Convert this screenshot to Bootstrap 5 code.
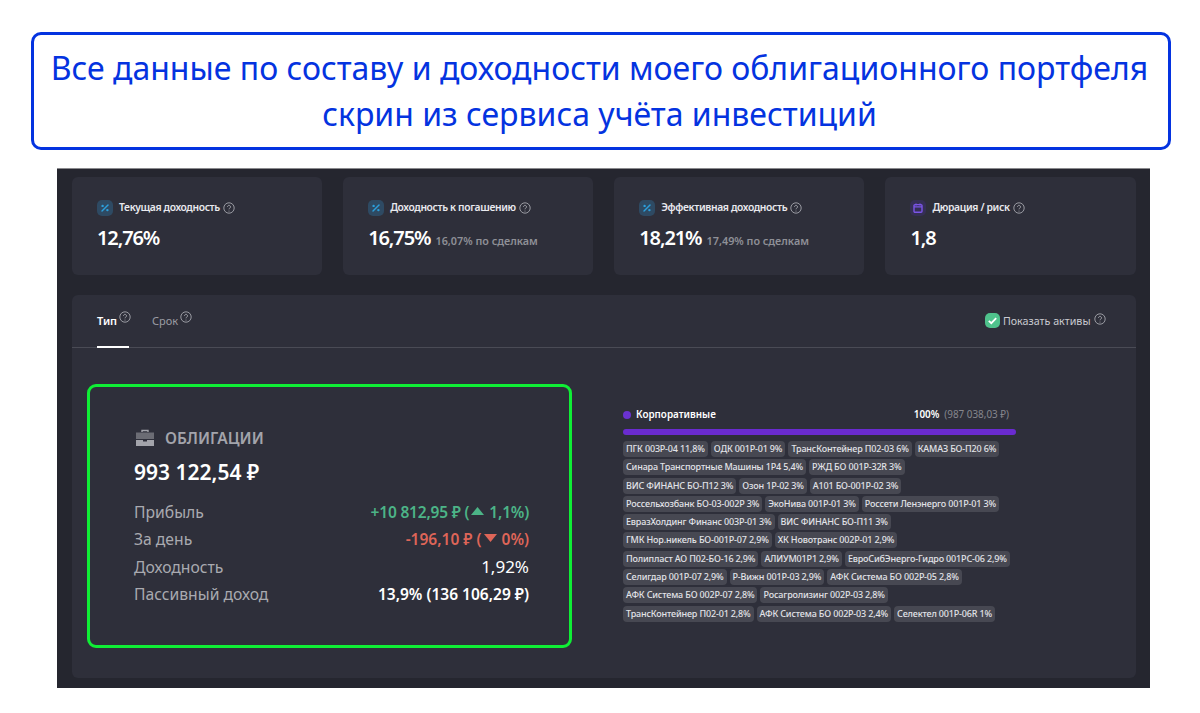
<!DOCTYPE html>
<html lang="ru">
<head>
    <meta charset="UTF-8">
    <meta name="viewport" content="width=device-width, initial-scale=1.0">
    <title>Облигационный портфель</title>
    <link href="https://cdn.jsdelivr.net/npm/bootstrap@5.3.0/dist/css/bootstrap.min.css" rel="stylesheet">
    <style>
        body {
            background: #fff;
            font-family: "Noto Sans", "Open Sans", sans-serif;
            height: 713px;
            overflow: hidden;
        }
        .page-wrap {
            padding: 32px 29px 0 31px;
        }
        .caption-box {
            height: 118px;
            border: 3px solid #0433e0;
            border-radius: 10px;
            color: #0433e0;
            font-size: 32px;
            line-height: 46px;
            padding: 10px 3px 0 0;
        }
        .shot {
            width: 1093px;
            height: 520px;
            margin: 18px 0 0 26px;
            background: #25262f;
            border-top: 1px solid #8a8a8e;
            padding: 8px 14.5px 10px 15px;
            color: #fff;
        }
        .stat-row {
            display: grid;
            grid-template-columns: repeat(4, 1fr);
            gap: 21px;
            height: 98px;
        }
        .stat-box {
            background: #2e2f3a;
            border-radius: 6px;
            padding: 23px 25px 0;
        }
        .stat-title {
            font-size: 10.3px;
            font-weight: 600;
            color: #e9e9ee;
            height: 16px;
            letter-spacing: -.35px;
        }
        .stat-icon {
            width: 16px;
            height: 16px;
            border-radius: 5px;
            background: #2e4a63;
            margin-right: 6px;
        }
        .stat-icon.violet { background: #352f55; }
        .hint {
            width: 12px;
            height: 12px;
            margin-left: 3px;
            flex: none;
        }
        .stat-value {
            font-size: 20px;
            font-weight: 600;
            line-height: 26px;
            margin-top: 9px;
            letter-spacing: -1.1px;
        }
        .stat-note {
            font-size: 10.8px;
            font-weight: 600;
            color: #8f9097;
            letter-spacing: 0;
            margin-left: 1px;
        }
        .main-panel {
            background: #2e2f3a;
            border-radius: 6px;
            margin-top: 20px;
            height: 383px;
        }
        .tab-bar {
            height: 53px;
            border-bottom: 1px solid #4a4b55;
            padding: 0 25px;
            font-size: 11px;
        }
        .tab-item {
            height: 53px;
            padding-top: 16px;
            color: #9a9ba3;
            margin-right: 23px;
            width: 32px;
            white-space: nowrap;
        }
        .tab-item.on {
            color: #fff;
            font-weight: 600;
            border-bottom: 2px solid #fff;
        }
        .tab-item .hint { margin-left: 2px; vertical-align: 2px; }
        .show-toggle {
            color: #c9cad0;
            font-size: 10.7px;
            padding-top: 18px;
            margin-right: 5px;
            height: 53px;
        }
        .check-box {
            width: 15px;
            height: 15px;
            border-radius: 5px;
            background: #4fc28c;
            margin-right: 3px;
        }
        .panel-body {
            padding: 36px 0 0 15px;
        }
        .bond-box {
            width: 485px;
            height: 264px;
            flex: none;
            border: 3px solid #0fee35;
            border-radius: 9px;
            padding: 41px 40px 0 44px;
            color: #a9aab0;
            font-size: 15.7px;
        }
        .bond-head {
            font-weight: 600;
            font-size: 15.5px;
            color: #a3a4ab;
            line-height: 20px;
        }
        .bond-head svg { margin: 0 10px 0 1px; }
        .bond-total {
            color: #fff;
            font-size: 21px;
            font-weight: 600;
            line-height: 28px;
            margin: 10px 0 13px;
        }
        .bond-row { height: 27.3px; line-height: 26px; }
        .val-up { color: #4cb487; font-weight: 600; font-size: 15.5px; letter-spacing: -.2px; }
        .val-down { color: #de6558; font-weight: 600; font-size: 15.5px; }
        .val-plain { color: #fff; font-size: 17px; }
        .val-bold { color: #fff; font-weight: 600; font-size: 15.5px; }
        .tri { width: 15px; height: 10px; margin: 0 4px 0 1px; vertical-align: 2px; }
        .class-col {
            width: 393px;
            margin: 21px 0 0 51px;
            font-size: 9px;
        }
        .class-head {
            font-size: 9.9px;
            font-weight: 600;
            height: 19px;
            line-height: 19px;
        }
        .dot {
            width: 8px;
            height: 8px;
            border-radius: 50%;
            background: #6a32d0;
            margin-right: 5px;
        }
        .class-sum { color: #85868d; font-weight: 400; margin: 0 7px 0 5px; }
        .class-bar {
            height: 6px;
            border-radius: 3px;
            background: #6a2bd0;
            margin: 5px 0 6px;
        }
        .chip-row { gap: 3px; margin-bottom: 2.3px; white-space: nowrap; }
        .chip-row span {
            background: #474852;
            color: #e2e3e8;
            border-radius: 4px;
            height: 16px;
            line-height: 15px;
            padding: 0 3px;
            font-weight: 500;
            letter-spacing: -.16px;
        }
    </style>
</head>
<body>
    <svg width="0" height="0" class="position-absolute">
        <symbol id="hint" viewBox="0 0 12 12">
            <circle cx="6" cy="6" r="5.2" fill="none" stroke="#b4b5bb" stroke-width=".8"/>
            <path d="M4.500 4.800a1.500 1.500 0 1 1 2.300 1.300c-.5.3-.8.6-.8 1.200" fill="none" stroke="#b4b5bb" stroke-width=".8"/>
            <circle cx="6" cy="8.900" r=".5" fill="#b4b5bb"/>
        </symbol>
        <symbol id="percent" viewBox="0 0 16 16">
            <path d="M5 11l6-6" stroke="#2c9fdc" stroke-width="1.4" stroke-linecap="round"/>
            <circle cx="5.600" cy="5.900" r="1.200" fill="#2c9fdc"/>
            <circle cx="10.400" cy="10.100" r="1.200" fill="#2c9fdc"/>
        </symbol>
    </svg>

    <div class="page-wrap">
        <div class="caption-box text-center">
            Все данные по составу и доходности моего облигационного портфеля<br>
            скрин из сервиса учёта инвестиций
        </div>

        <div class="shot">
            <!-- Stat cards -->
            <div class="stat-row">
                <div class="stat-box">
                    <div class="stat-title d-flex align-items-center">
                        <svg class="stat-icon"><use href="#percent"/></svg>Текущая доходность<svg class="hint"><use href="#hint"/></svg>
                    </div>
                    <div class="stat-value">12,76%</div>
                </div>
                <div class="stat-box">
                    <div class="stat-title d-flex align-items-center">
                        <svg class="stat-icon"><use href="#percent"/></svg>Доходность к погашению<svg class="hint"><use href="#hint"/></svg>
                    </div>
                    <div class="stat-value">16,75% <span class="stat-note">16,07% по сделкам</span></div>
                </div>
                <div class="stat-box">
                    <div class="stat-title d-flex align-items-center">
                        <svg class="stat-icon"><use href="#percent"/></svg>Эффективная доходность<svg class="hint"><use href="#hint"/></svg>
                    </div>
                    <div class="stat-value">18,21% <span class="stat-note">17,49% по сделкам</span></div>
                </div>
                <div class="stat-box">
                    <div class="stat-title d-flex align-items-center">
                        <svg class="stat-icon violet" viewBox="0 0 16 16">
                            <rect x="4" y="4.600" width="8" height="7.600" rx="1" fill="none" stroke="#7b55e8" stroke-width="1.400"/>
                            <path d="M4 6.800h8M6 3.400v2M10 3.400v2" stroke="#7b55e8" stroke-width="1.200"/>
                        </svg>Дюрация / риск<svg class="hint"><use href="#hint"/></svg>
                    </div>
                    <div class="stat-value">1,8</div>
                </div>
            </div>

            <!-- Main panel -->
            <div class="main-panel">
                <div class="tab-bar d-flex">
                    <div class="tab-item on">Тип<svg class="hint"><use href="#hint"/></svg></div>
                    <div class="tab-item">Срок<svg class="hint"><use href="#hint"/></svg></div>
                    <div class="show-toggle ms-auto d-flex align-items-start">
                        <svg class="check-box" viewBox="0 0 15 15"><path d="M3.800 7.800l2.500 2.400 4.900-5" fill="none" stroke="#fff" stroke-width="1.800"/></svg>
                        Показать активы<svg class="hint"><use href="#hint"/></svg>
                    </div>
                </div>

                <div class="panel-body d-flex">
                    <div class="bond-box">
                        <div class="bond-head d-flex align-items-center">
                            <svg width="20" height="18" viewBox="0 0 20 18">
                                <path d="M7 3V1.500h6V3" fill="none" stroke="#a3a4ab" stroke-width="1.400"/>
                                <path d="M1 3.500h18v6.500H1z" fill="#6b6c74"/>
                                <path d="M1 11h7v1.500h4V11h7v6H1z" fill="#a3a4ab"/>
                            </svg>
                            ОБЛИГАЦИИ
                        </div>
                        <div class="bond-total">993 122,54 ₽</div>
                        <div class="bond-row d-flex justify-content-between">
                            <span>Прибыль</span>
                            <span class="val-up">+10 812,95 ₽ (<svg class="tri" viewBox="0 0 15 10"><path d="M7.500 1L14 9H1z" fill="#4cb487"/></svg>1,1%)</span>
                        </div>
                        <div class="bond-row d-flex justify-content-between">
                            <span>За день</span>
                            <span class="val-down">-196,10 ₽ (<svg class="tri" viewBox="0 0 15 10"><path d="M7.500 9L14 1H1z" fill="#de6558"/></svg>0%)</span>
                        </div>
                        <div class="bond-row d-flex justify-content-between">
                            <span>Доходность</span>
                            <span class="val-plain">1,92%</span>
                        </div>
                        <div class="bond-row d-flex justify-content-between">
                            <span>Пассивный доход</span>
                            <span class="val-bold">13,9% (136 106,29 ₽)</span>
                        </div>
                    </div>

                    <div class="class-col">
                        <div class="class-head d-flex align-items-center">
                            <span class="dot"></span>Корпоративные
                            <span class="ms-auto">100%</span><span class="class-sum">(987 038,03 ₽)</span>
                        </div>
                        <div class="class-bar"></div>
                        <div class="chip-row d-flex"><span>ПГК 003Р-04 11,8%</span><span>ОДК 001Р-01 9%</span><span>ТрансКонтейнер П02-03 6%</span><span>КАМАЗ БО-П20 6%</span></div>
                        <div class="chip-row d-flex"><span>Синара Транспортные Машины 1Р4 5,4%</span><span>РЖД БО 001Р-32R 3%</span></div>
                        <div class="chip-row d-flex"><span>ВИС ФИНАНС БО-П12 3%</span><span>Озон 1Р-02 3%</span><span>А101 БО-001Р-02 3%</span></div>
                        <div class="chip-row d-flex"><span>Россельхозбанк БО-03-002Р 3%</span><span>ЭкоНива 001Р-01 3%</span><span>Россети Ленэнерго 001Р-01 3%</span></div>
                        <div class="chip-row d-flex"><span>ЕвразХолдинг Финанс 003Р-01 3%</span><span>ВИС ФИНАНС БО-П11 3%</span></div>
                        <div class="chip-row d-flex"><span>ГМК Нор.никель БО-001Р-07 2,9%</span><span>ХК Новотранс 002Р-01 2,9%</span></div>
                        <div class="chip-row d-flex"><span>Полипласт АО П02-БО-16 2,9%</span><span>АЛИУМ01Р1 2,9%</span><span>ЕвроСибЭнерго-Гидро 001РС-06 2,9%</span></div>
                        <div class="chip-row d-flex"><span>Селигдар 001Р-07 2,9%</span><span>Р-Вижн 001Р-03 2,9%</span><span>АФК Система БО 002Р-05 2,8%</span></div>
                        <div class="chip-row d-flex"><span>АФК Система БО 002Р-07 2,8%</span><span>Росагролизинг 002Р-03 2,8%</span></div>
                        <div class="chip-row d-flex"><span>ТрансКонтейнер П02-01 2,8%</span><span>АФК Система БО 002Р-03 2,4%</span><span>Селектел 001Р-06R 1%</span></div>
                    </div>
                </div>
            </div>
        </div>
    </div>

    <script src="https://cdn.jsdelivr.net/npm/bootstrap@5.3.0/dist/js/bootstrap.bundle.min.js"></script>
</body>
</html>
